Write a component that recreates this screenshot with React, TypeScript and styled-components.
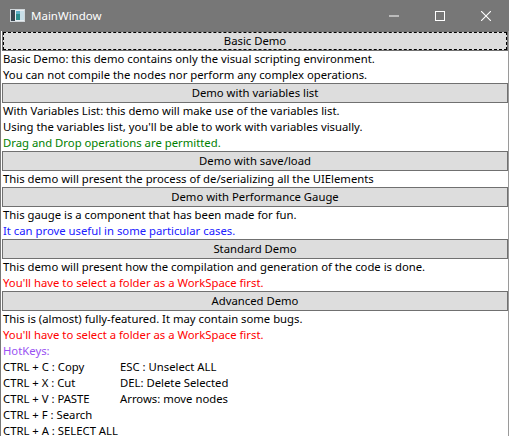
import React from "react";
import styled, { createGlobalStyle } from "styled-components";

const Global = createGlobalStyle`
  html, body { margin: 0; padding: 0; background: #fff; }
  body { width: 509px; height: 436px; overflow: hidden; font-family: "Noto Sans", "Open Sans", sans-serif; }
`;

const Window = styled.div`
  width: 509px;
  height: 436px;
  display: flex;
  flex-direction: column;
  overflow: hidden;
  background: #fff;
`;

const TitleBar = styled.div`
  height: 31px;
  flex: none;
  background: #777777;
  display: flex;
  align-items: center;
  color: #fff;
  font-size: 11.5px;
`;

const AppIcon = styled.svg`
  margin-left: 10px;
  margin-right: 6px;
  flex: none;
`;

const Title = styled.span`
  flex: 1;
  line-height: 16px;
`;

const Caption = styled.div`
  width: 46px;
  height: 31px;
  display: flex;
  align-items: center;
  justify-content: center;
`;

const Body = styled.div`
  flex: 1;
  display: flex;
  flex-direction: column;
  border-left: 1px solid #777777;
  border-right: 1px solid #9a9a9a;
  padding: 0 0 0 1px;
  overflow: hidden;
`;

const DemoButton = styled.div<{ $focused?: boolean }>`
  height: 20px;
  box-sizing: border-box;
  flex: none;
  background: #dddddd;
  border: 1px solid #707070;
  display: flex;
  align-items: center;
  justify-content: center;
  font-size: 11.3px;
  color: #000;
  line-height: 16px;
  ${(p) => (p.$focused ? "outline: 1px dashed #000; outline-offset: -2px;" : "")}
`;

const Line = styled.div<{ $color?: string }>`
  height: 16px;
  flex: none;
  line-height: 15px;
  font-size: 11.3px;
  padding-left: 1px;
  color: ${(p) => p.$color || "#000"};
  white-space: nowrap;
`;

const KeyRow = styled.div`
  display: grid;
  grid-template-columns: 117px auto;
  height: 16px;
  flex: none;
  line-height: 15px;
  font-size: 11.3px;
  padding-left: 1px;
  white-space: nowrap;
`;

export default function App() {
  return (
    <>
      <Global />
      <Window>
        <TitleBar>
          <AppIcon width="15" height="13" viewBox="0 0 15 13">
            <rect x="0.5" y="0.5" width="14" height="12" fill="#e8eef2" stroke="#d0d6da" />
            <rect x="1" y="1" width="4" height="11" fill="#3a4650" />
            <rect x="6" y="2" width="4" height="9" fill="#2a8c8c" />
            <rect x="10" y="2" width="4" height="9" fill="#c9dfe8" />
            <rect x="6" y="2" width="4" height="3" fill="#5fb0c8" />
          </AppIcon>
          <Title>MainWindow</Title>
          <Caption>
            <svg width="10" height="10" viewBox="0 0 10 10">
              <rect x="0" y="4.5" width="10" height="1" fill="#fff" />
            </svg>
          </Caption>
          <Caption>
            <svg width="10" height="10" viewBox="0 0 10 10">
              <rect x="0.5" y="0.5" width="9" height="9" fill="none" stroke="#fff" />
            </svg>
          </Caption>
          <Caption>
            <svg width="10" height="10" viewBox="0 0 10 10">
              <path d="M0 0 L10 10 M10 0 L0 10" stroke="#fff" strokeWidth="1.1" />
            </svg>
          </Caption>
        </TitleBar>
        <Body>
          <DemoButton $focused>Basic Demo</DemoButton>
          <Line>Basic Demo: this demo contains only the visual scripting environment.</Line>
          <Line>You can not compile the nodes nor perform any complex operations.</Line>
          <DemoButton>Demo with variables list</DemoButton>
          <Line>With Variables List: this demo will make use of the variables list.</Line>
          <Line>Using the variables list, you'll be able to work with variables visually.</Line>
          <Line $color="#008000">Drag and Drop operations are permitted.</Line>
          <DemoButton>Demo with save/load</DemoButton>
          <Line>This demo will present the process of de/serializing all the UIElements</Line>
          <DemoButton>Demo with Performance Gauge</DemoButton>
          <Line>This gauge is a component that has been made for fun.</Line>
          <Line $color="#2020ff">It can prove useful in some particular cases.</Line>
          <DemoButton>Standard Demo</DemoButton>
          <Line>This demo will present how the compilation and generation of the code is done.</Line>
          <Line $color="#ff0000">You'll have to select a folder as a WorkSpace first.</Line>
          <DemoButton>Advanced Demo</DemoButton>
          <Line>This is (almost) fully-featured. It may contain some bugs.</Line>
          <Line $color="#ff0000">You'll have to select a folder as a WorkSpace first.</Line>
          <Line $color="#9a52f2">HotKeys:</Line>
          <KeyRow><span>CTRL + C : Copy</span><span>ESC : Unselect ALL</span></KeyRow>
          <KeyRow><span>CTRL + X : Cut</span><span>DEL: Delete Selected</span></KeyRow>
          <KeyRow><span>CTRL + V : PASTE</span><span>Arrows: move nodes</span></KeyRow>
          <KeyRow><span>CTRL + F : Search</span><span></span></KeyRow>
          <KeyRow><span>CTRL + A : SELECT ALL</span><span></span></KeyRow>
        </Body>
      </Window>
    </>
  );
}
